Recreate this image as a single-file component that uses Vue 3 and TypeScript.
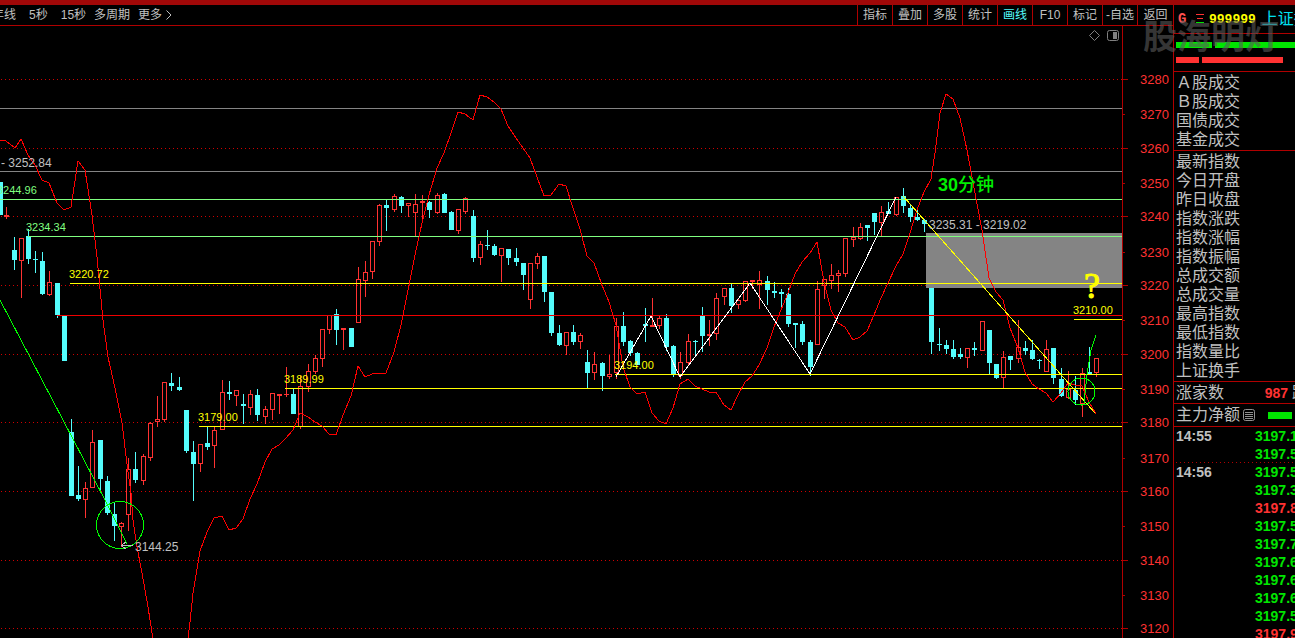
<script setup lang="ts">
interface Candle { x: number; high: number; low: number; top: number; bottom: number; up: boolean }
interface Level { y: number; from: number; tone: string }
interface Label { x: number; y: number; text: string; tone: string }

const periods: string[] = ['年线', '5秒', '15秒']
const morePeriods: string[] = ['多周期', '更多']
const tools: string[] = ['指标', '叠加', '多股', '统计', '画线', 'F10', '标记', '-自选', '返回']

// x, high, low, body top, body bottom; a leading + marks a rising bar
const bars = `
-0 182 215 182 215|+6 207 219 215 217|-14 237 270 250 260|+21 238 298 238 261|-28 229 264 236 259|-35 251 273 259 260
-42 252 295 261 294|+49 271 296 282 295|-57 283 318 283 315|-64 316 361 316 361|-71 419 496 432 496|-78 466 501 495 499
+85 482 518 488 500|+92 430 488 442 488|-100 440 492 440 479|-107 476 515 481 513|-114 503 541 514 526|+121 522 547 523 527
+128 458 531 469 515|-135 452 483 469 480|+143 454 485 456 481|+150 422 461 423 458|+157 396 427 419 422|+164 382 422 382 420
-171 373 391 383 386|-179 377 391 387 390|-186 410 453 410 451|-193 441 501 452 464|+200 444 472 444 464|-207 427 450 443 447
+214 427 468 430 446|+222 380 430 392 430|-229 381 400 392 394|+236 390 406 390 396|-243 394 424 404 406|+250 390 415 394 408
-257 389 421 395 415|+265 406 424 409 417|+272 393 420 393 410|+279 394 414 394 396|+286 367 397 394 395|-293 389 414 394 414
+300 376 429 386 427|+308 364 392 371 387|+315 355 374 358 372|+322 329 367 329 359|+329 315 334 315 330|-336 309 345 314 330
+343 328 350 328 330|-351 328 347 328 347|+358 267 323 279 323|+365 261 297 272 281|+372 241 279 241 272|+379 204 246 205 242
-386 200 231 205 208|+394 194 212 196 210|-401 196 213 197 206|+408 203 217 203 206|+415 194 236 204 213|+422 195 221 201 203
-429 201 218 202 210|+437 193 214 195 213|-444 193 213 194 213|-451 211 230 212 230|+458 209 234 209 231|+465 197 214 198 212
-473 210 262 216 258|+480 241 265 244 258|-487 230 250 245 246|-494 244 256 246 255|+501 248 282 248 256|-508 249 265 249 258
-516 248 266 258 262|-523 263 290 263 275|+530 263 309 263 300|+537 253 269 256 264|-544 256 302 256 292|-551 292 336 292 333
-559 325 346 333 345|+566 332 355 332 346|-573 325 345 332 342|+580 333 349 335 342|-587 350 388 362 373|+594 352 380 364 373
-602 362 391 363 376|+609 355 379 374 377|+616 318 379 326 373|-623 312 346 326 342|-630 340 356 341 353|-637 352 365 353 365
-645 308 342 324 326|+652 298 327 325 327|+659 316 329 318 326|-666 314 351 318 347|-673 345 377 346 375|+680 352 379 362 376
+688 334 365 341 363|-695 340 356 341 342|-702 307 352 316 336|+709 320 346 334 336|+716 293 340 298 334|+724 288 305 288 297
-731 284 313 288 306|+738 298 309 300 305|+745 281 302 281 301|+752 280 289 280 282|+759 271 309 280 285|-767 276 305 281 290
-774 282 298 291 293|-781 289 309 292 294|-788 288 327 294 324|-795 323 348 323 325|-802 321 345 324 342|-810 340 376 342 367
+817 281 345 289 345|+824 279 299 279 286|+831 264 289 275 281|+838 270 292 273 276|+845 238 277 238 274|+853 227 247 237 240
+860 223 240 227 239|-867 225 241 225 228|-874 213 235 213 222|+881 206 236 212 223|-888 202 214 211 214|+896 197 216 197 215
-903 188 213 196 206|-910 204 222 208 217|-917 207 221 217 220|-924 219 232 220 224|-931 288 354 288 342|-939 328 351 344 345
-946 340 354 345 349|-953 340 359 349 357|-960 348 359 354 357|+967 348 368 348 358|-974 342 356 348 350|+982 321 351 321 351
-989 330 374 330 363|-996 364 379 364 378|+1003 351 388 357 378|-1010 356 370 356 360|+1018 320 363 347 359|-1025 341 355 348 351
-1032 340 360 350 359|-1039 359 369 360 361|+1046 340 372 349 372|-1053 348 384 348 378|-1061 368 397 379 396|+1068 371 399 389 398
-1075 376 405 390 400|+1082 368 417 373 404|-1089 347 374 372 374|+1096 358 377 358 373`

const candles: Candle[] = bars.trim().split(/[|\n]/).map((row) => {
  const [x, high, low, top, bottom] = row.slice(1).split(' ').map(Number)
  return { x, high, low, top, bottom, up: row[0] === '+' }
})
const falling = candles.filter((c) => !c.up)
const rising = candles.filter((c) => c.up)

const indicatorLeft = '0,140 6,141 15,148 21,139 28,155 35,165 42,180 49,183 57,203 64,210 71,207 78,161 85,170 92,215 97,257 103,320 108,357 115,388 122,423 128,472 131,493 133,520 137,547 142,573 148,607 153,639'
const indicatorRight = '188,639 190,622 193,593 200,551 207,532 214,518 222,516 229,530 236,528 243,519 250,499 257,484 265,462 272,449 279,445 286,438 293,430 300,413 308,417 315,422 322,426 329,434 336,435 343,415 351,396 358,366 365,377 372,374 379,373 386,373 394,352 401,325 408,290 415,255 422,223 429,195 437,168 444,153 451,133 458,112 465,114 473,120 480,95 487,97 494,102 501,109 508,126 516,138 523,148 530,158 537,177 544,196 551,195 559,184 566,186 573,208 580,229 587,256 594,263 602,285 609,302 616,325 618,337 623,367 630,387 637,394 645,392 652,413 659,421 666,424 673,408 680,384 688,379 695,386 702,389 709,392 716,392 724,405 731,410 738,395 745,382 752,376 759,365 767,348 774,327 781,310 788,293 795,274 802,262 810,253 817,242 824,282 831,310 838,323 845,327 853,340 860,337 867,331 874,315 881,298 888,283 896,266 903,254 910,233 917,210 924,192 931,179 935,153 940,113 946,94 953,99 960,118 967,150 974,188 982,230 989,278 996,292 1003,300 1010,328 1018,348 1025,372 1032,384 1039,389 1046,393 1053,402 1061,393 1068,383 1075,385 1082,386 1089,402 1096,414'

const majors: number[] = [79, 148, 216, 285, 354, 422, 491, 560, 628]
const minors: number[] = [114, 183, 252, 320, 389, 458, 526, 595]

const levels: Level[] = [
  { y: 108, from: 0, tone: 'grey' },
  { y: 171, from: 0, tone: 'grey' },
  { y: 199, from: 0, tone: 'lime' },
  { y: 236, from: 28, tone: 'lime' },
  { y: 283, from: 70, tone: 'yellow' },
  { y: 315, from: 57, tone: 'red' },
  { y: 319, from: 1074, tone: 'yellow' },
  { y: 374, from: 615, tone: 'yellow' },
  { y: 388, from: 285, tone: 'yellow' },
  { y: 426, from: 199, tone: 'yellow' },
]

const labels: Label[] = [
  { x: -3, y: 194, text: '3244.96', tone: 'lime' },
  { x: 26, y: 231, text: '3234.34', tone: 'lime' },
  { x: 69, y: 278, text: '3220.72', tone: 'yellow' },
  { x: 284, y: 383, text: '3189.99', tone: 'yellow' },
  { x: 198, y: 421, text: '3179.00', tone: 'yellow' },
  { x: 614, y: 369, text: '3194.00', tone: 'yellow' },
  { x: 1073, y: 314, text: '3210.00', tone: 'yellow' },
]
const notes: Label[] = [
  { x: 1, y: 167, text: '- 3252.84', tone: 'silver' },
  { x: 929, y: 229, text: '3235.31 - 3219.02', tone: 'silver' },
  { x: 135, y: 551, text: '3144.25', tone: 'silver' },
]

const turnover: string[] = ['Ａ股成交', 'Ｂ股成交', '国债成交', '基金成交']
const quotes: string[] = ['最新指数', '今日开盘', '昨日收盘', '指数涨跌', '指数涨幅', '指数振幅', '总成交额', '总成交量', '最高指数', '最低指数', '指数量比', '上证换手']
const ticks: { time: string; price: string; up?: boolean; last?: boolean }[] = [
  { time: '14:55', price: '3197.1' },
  { time: '', price: '3197.5', last: true },
  { time: '14:56', price: '3197.5' },
  { time: '', price: '3197.3' },
  { time: '', price: '3197.8', up: true },
  { time: '', price: '3197.5' },
  { time: '', price: '3197.7' },
  { time: '', price: '3197.6' },
  { time: '', price: '3197.6' },
  { time: '', price: '3197.6' },
  { time: '', price: '3197.5' },
  { time: '', price: '3197.9', up: true },
]
</script>

<template>
  <div class="app">
    <div class="strip"></div>
    <div class="body">
      <main class="main">
        <header class="toolbar">
          <nav class="periods">
            <div class="group wide">
              <button v-for="p in periods" :key="p" type="button">{{ p }}</button>
            </div>
            <div class="group">
              <button v-for="p in morePeriods" :key="p" type="button">{{ p }}</button>
              <svg class="chevron" width="6" height="10" viewBox="0 0 6 10"><path d="M0.5 0.5 L5 5 L0.5 9.5" /></svg>
            </div>
          </nav>
          <nav class="tools">
            <button v-for="t in tools" :key="t" type="button" :class="{ active: t === '画线' }">{{ t }}</button>
          </nav>
        </header>

        <svg class="chart" viewBox="0 26 1173 612" role="img" aria-label="K线图">
          <g class="crisp">
            <line v-for="y in majors" :key="y" class="grid" x1="1" :y1="y + 0.5" x2="1122" :y2="y + 0.5" />
            <rect class="zone" x="926" y="233" width="196" height="55" />
          </g>

          <g class="crisp">
            <g v-for="c in rising" :key="c.x" class="up">
              <rect :x="c.x" :y="c.high" width="1" :height="c.top - c.high" />
              <rect :x="c.x" :y="c.bottom" width="1" :height="c.low - c.bottom" />
              <rect v-if="c.bottom - c.top < 3" :x="c.x - 2" :y="c.top" width="5" :height="c.bottom - c.top" />
              <rect v-else class="hollow" :x="c.x - 1.5" :y="c.top + 0.5" width="4" :height="c.bottom - c.top - 1" />
            </g>
            <g v-for="c in falling" :key="c.x" class="down">
              <rect :x="c.x" :y="c.high" width="1" :height="c.low - c.high" />
              <rect :x="c.x - 2" :y="c.top" width="5" :height="c.bottom - c.top" />
            </g>
          </g>

          <g class="crisp">
            <rect v-for="l in levels" :key="l.y" :class="l.tone" :x="l.from" :y="l.y" :width="1122 - l.from" height="1" />
            <polyline class="curve" :points="indicatorLeft" />
            <polyline class="curve" :points="indicatorRight" />
            <polyline class="wave" points="616,377 651,316 680,377 750,283 810,374 896,197" />
            <path class="trend" d="M903 196 L1095 413" />
            <path class="mark" d="M0 300 L105 500 L127 544 M1084 403 L1087 374 L1091 350 L1096 335" />
            <circle class="mark" cx="120" cy="525" r="23.5" />
            <circle class="mark" cx="1081.5" cy="391.5" r="13.5" />
            <path class="pointer" d="M121 545.5 H133 M125.5 542 L121.5 545.5 L125.5 549" />
          </g>

          <text v-for="l in labels" :key="l.text" class="price" :class="l.tone" :x="l.x" :y="l.y">{{ l.text }}</text>
          <text v-for="n in notes" :key="n.text" class="note" :class="n.tone" :x="n.x" :y="n.y">{{ n.text }}</text>
          <text class="title" x="938" y="191">30<tspan class="unit">分钟</tspan></text>
          <text class="query" x="1084" y="298">?</text>

          <g class="crisp axis">
            <rect x="1122" y="26" width="1" height="612" />
            <rect v-for="y in majors" :key="y" x="1123" :y="y" width="5" height="1" />
            <rect v-for="y in minors" :key="y" x="1123" :y="y" width="2" height="1" />
          </g>
          <text v-for="(y, i) in majors" :key="'a' + y" class="scale" x="1140" :y="y + 5">{{ 3280 - i * 20 }}</text>
          <text v-for="(y, i) in minors" :key="'b' + y" class="scale" x="1140" :y="y + 5">{{ 3270 - i * 20 }}</text>

          <path class="icon" d="M1089.5 35.5 L1094.5 30.5 L1099.5 35.5 L1094.5 40.5 Z" />
          <rect class="icon" x="1107.5" y="30.5" width="11" height="10" rx="2" />
          <rect class="icon-fill" x="1113" y="32" width="4" height="7" />
        </svg>
      </main>

      <aside class="side">
        <header class="symbol">
          <span class="flag">G</span>
          <svg class="menu" width="8" height="10" viewBox="0 0 8 10"><path class="m1" d="M0 0.5 H8 M1 4.5 H7" /><path class="m2" d="M0 8.5 H8" /></svg>
          <span class="code">999999</span>
          <span class="name">上证指数</span>
        </header>
        <section class="meters">
          <div class="meter buy"><i></i><i></i></div>
          <div class="meter sell"><i></i><i></i></div>
        </section>
        <ul class="rows">
          <li v-for="t in turnover" :key="t">{{ t }}</li>
        </ul>
        <ul class="rows">
          <li v-for="q in quotes" :key="q">{{ q }}</li>
        </ul>
        <div class="pair"><span>涨家数</span><b>987</b><span>跌家数</span></div>
        <div class="net">
          <span>主力净额</span>
          <svg width="12" height="12" viewBox="0 0 12 12"><rect x="0.5" y="0.5" width="11" height="11" rx="2" /><path d="M2 3.5 H10 M2 5.5 H10 M2 7.5 H10 M2 9.5 H10" /></svg>
          <i></i>
        </div>
        <ol class="ticks">
          <li v-for="(t, i) in ticks" :key="i" :class="{ last: t.last }">
            <time>{{ t.time }}</time><b :class="{ rise: t.up }">{{ t.price }}</b>
          </li>
        </ol>
      </aside>
      <div class="watermark">股海明灯</div>
    </div>
  </div>
</template>

<style>
body { margin: 0; background: #000; }
</style>

<style scoped>
.app {
  display: flex;
  flex-direction: column;
  height: 100vh;
  overflow: hidden;
  background: #000;
  color: #c0c0c0;
  font-family: "Liberation Sans", "Noto Sans CJK SC", sans-serif;
  font-size: 12px;
}
.strip { height: 5px; flex: none; background: #a00808; }
.body { position: relative; display: flex; flex: 1; min-height: 0; }
.main { flex: 1; min-width: 0; }
button {
  margin: 0;
  padding: 0;
  border: 0;
  background: none;
  color: inherit;
  font: inherit;
  line-height: 20px;
  white-space: nowrap;
}
.toolbar {
  display: flex;
  justify-content: space-between;
  height: 20px;
  border-bottom: 1px solid #b00000;
  overflow: hidden;
}
.periods { display: flex; align-items: center; gap: 8px; margin-left: -8px; }
.group { display: flex; align-items: center; gap: 8px; }
.wide { gap: 13px; }
.chevron { margin-left: -4px; }
.chevron path { fill: none; stroke: #c0c0c0; }
.tools { display: grid; grid-template-columns: repeat(8, 35px) 36px; }
.tools button { border-left: 1px solid #b00000; }
.tools .active { color: #54fcfc; }

.chart { display: block; width: 100%; height: auto; }
.crisp { shape-rendering: crispEdges; }
.grid { stroke: #d00000; stroke-dasharray: 1 3; }
.zone { fill: #848484; }
.up { fill: #ff3232; }
.hollow { fill: none; stroke: #ff3232; }
.down { fill: #54fcfc; }
.grey { fill: #848484; }
.lime { fill: #80ff80; }
.yellow { fill: #ffff00; }
.red { fill: #f00000; }
.silver { fill: #c0c0c0; }
.curve, .wave, .trend, .mark, .pointer { fill: none; }
.curve { stroke: #ff0000; }
.wave { stroke: #fff; }
.trend { stroke: #ffff00; }
.mark { stroke: #00ff00; }
.pointer { stroke: #c0c0c0; }
.axis { fill: #b00000; }
.price { font-size: 11px; }
.note { font-size: 12px; }
.scale { font-size: 13px; fill: #ff3232; }
.title { font-size: 18px; font-weight: bold; fill: #00f000; }
.unit { font-weight: 500; }
.query { font-family: "Liberation Serif", serif; font-size: 36px; fill: #ffff00; stroke: #ffff00; }
.icon { fill: none; stroke: #808080; }
.icon-fill { fill: #808080; }

.side {
  display: flex;
  flex-direction: column;
  flex: none;
  width: 121px;
  border-left: 1px solid #b00000;
  overflow: hidden;
  font-size: 16px;
  white-space: nowrap;
}
.side > * { flex: none; box-sizing: border-box; }
.symbol, .pair, .net { display: flex; align-items: center; padding-left: 2px; border-bottom: 1px solid #b00000; }
.symbol > *, .pair > *, .net > * { flex: none; }
.symbol { height: 29px; }
.flag { width: 20px; padding-left: 2px; box-sizing: border-box; color: #ff5050; font-family: "Liberation Mono", monospace; font-weight: bold; font-size: 14px; }
.m1 { stroke: #ff3232; }
.m2 { stroke: #00e600; }
.code { margin: 0 6px 0 5px; color: #ffff00; font-family: "Liberation Mono", monospace; font-weight: bold; font-size: 13px; }
.name { color: #00e0f0; line-height: 20px; }
.meters { display: flex; flex-direction: column; gap: 9px; height: 38px; padding: 8px 0 0 2px; border-bottom: 1px solid #b00000; }
.meter { display: grid; gap: 3px; height: 6px; }
.buy { grid-template-columns: 36px 1fr; }
.sell { grid-template-columns: 23px 81px; }
.buy i { background: #00e600; }
.sell i { background: #ff3232; }
.rows { margin: 0; padding: 1px 0 1px 2px; list-style: none; border-bottom: 1px solid #b00000; line-height: 19px; }
.pair { height: 22px; line-height: 20px; }
.net { height: 23px; line-height: 20px; }
.pair b { width: 64px; margin-right: 4px; text-align: right; color: #ff3232; font-size: 14px; }
.net svg { margin: 0 13px 0 3px; fill: none; stroke: #909090; }
.net i { width: 24px; height: 7px; background: #00e600; }
.ticks { margin: 0; padding: 0 0 0 2px; list-style: none; font-size: 14px; font-weight: bold; }
.ticks li { display: flex; height: 18px; line-height: 18px; }
.ticks .last { background: repeating-linear-gradient(90deg, #b00000 0 1px, transparent 1px 4px) 0 100% / 100% 1px no-repeat; }
.ticks time { flex: none; width: 79px; }
.ticks b { color: #00e600; }
.ticks .rise { color: #ff3232; }
.watermark {
  position: absolute;
  top: 8px;
  right: 16px;
  color: rgba(90, 90, 90, 0.6);
  font-size: 34px;
  line-height: 48px;
  font-weight: bold;
  pointer-events: none;
}
</style>
